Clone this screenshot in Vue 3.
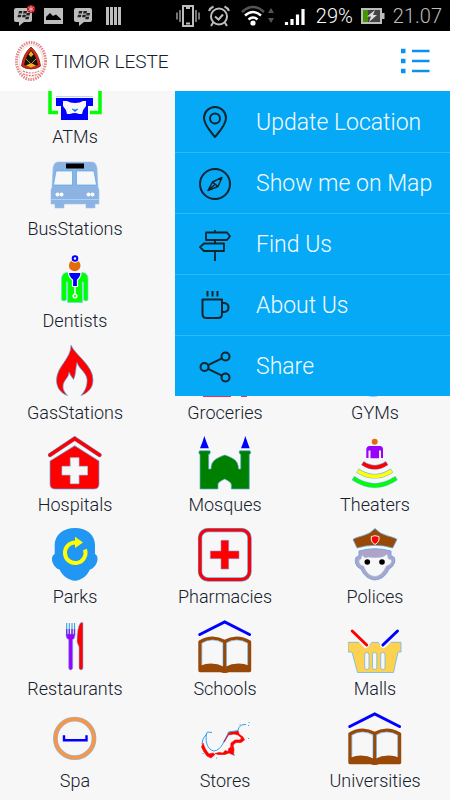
<script setup>
import { ref } from 'vue'

const menuOpen = ref(true)

const places = [
  { name: 'ATMs', icon: 'atm', first: true },
  { name: 'BusStations', icon: 'bus', first: true },
  { name: 'Dentists', icon: 'dentist', first: true },
  { name: 'GasStations', icon: 'gas', first: true },
  { name: 'Groceries', icon: 'grocery' },
  { name: 'GYMs', icon: 'gym' },
  { name: 'Hospitals', icon: 'hospital' },
  { name: 'Mosques', icon: 'mosque' },
  { name: 'Theaters', icon: 'theater' },
  { name: 'Parks', icon: 'park' },
  { name: 'Pharmacies', icon: 'pharmacy' },
  { name: 'Polices', icon: 'police' },
  { name: 'Restaurants', icon: 'restaurant' },
  { name: 'Schools', icon: 'school' },
  { name: 'Malls', icon: 'mall' },
  { name: 'Spa', icon: 'spa' },
  { name: 'Stores', icon: 'store' },
  { name: 'Universities', icon: 'school' }
]

const actions = [
  { name: 'Update Location', icon: 'pin' },
  { name: 'Show me on Map', icon: 'compass' },
  { name: 'Find Us', icon: 'signpost' },
  { name: 'About Us', icon: 'cup' },
  { name: 'Share', icon: 'share' }
]
</script>

<template>
  <div class="app">
    <svg class="sprite" width="0" height="0" aria-hidden="true">
      <!-- status bar -->
      <symbol id="bbm" viewBox="0 0 20 20">
        <path d="M2 2H16Q18 2 18 4V14Q18 16 16 16H10L5 20V16H2Q0 16 0 14V4Q0 2 2 2Z" fill="#bdbdbd" />
        <path d="M5 5h3.400l-.6 2.500H4.400zM9.600 5H13l-.6 2.500H9zM4 8.800h3.400l-.6 2.500H3.400zM8.600 8.800H12l-.6 2.500H8zM12.700 7h3.400l-.6 2.500h-3.400zM11.800 10.800h3.400l-.6 2.500h-3.400z" fill="#222" />
      </symbol>
      <!-- category icons -->
      <symbol id="atm" viewBox="0 0 54 54">
        <path d="M10 44.500H2V4H52V44.500H42" fill="none" stroke="#0f0" stroke-width="3.500" />
        <path d="M4 4H50V29H4Z" fill="#fff" />
        <path d="M8 28.500H45" stroke="#b9d6f2" />
        <path d="M8 30H45V38H40V52H13V38H8Z" fill="#00f" />
        <path d="M15 33H19Q22 35 27 35T35 33H38V38Q35 41 34 46H31Q27 44 22 46H19Q18 41 15 38Z" fill="#f7f7f7" />
        <path d="M24 41l3 2.500 3-2.500-3 1z" fill="#00f" stroke="#2196f3" />
      </symbol>
      <symbol id="bus" viewBox="0 0 54 54">
        <path d="M10 2H44Q48 2 49 8L50 27L51 30V44H47V48H38V44H16V48H7V44H3V30L4 27L5 8Q6 2 10 2Z" fill="#8db3e2" stroke="#9cc5f2" stroke-width=".6" />
        <path d="M8 11H24.500V25H5.500ZM28.500 11H46L48.500 25H28.500Z" fill="#f7f7f7" stroke="#4da6ee" stroke-width=".7" />
        <rect x="18" y="3.500" width="18" height="5" />
        <path d="M3 39.500H51" stroke="#a9d1f8" />
        <g fill="#fff"><circle cx="9.500" cy="34.500" r="2" /><circle cx="13.500" cy="34.500" r="2" /><circle cx="40.500" cy="34.500" r="2" /><circle cx="44.500" cy="34.500" r="2" /></g>
      </symbol>
      <symbol id="dentist" viewBox="0 0 54 54">
        <circle cx="26.700" cy="13.500" r="5.800" fill="#e36c0a" />
        <circle cx="27" cy="6.500" r="4.200" fill="#f7f7f7" />
        <circle cx="27" cy="6.500" r="2.300" fill="#fff" stroke="#00f" stroke-width="2" />
        <path d="M19 20.500H34.500Q40 21 40 27V48Q38 50 35.500 48V30H34.300L34.500 50.500H19.500V30H18.500V48Q16 50 13.500 48V27Q13.500 21 19 20.500Z" fill="#0f0" stroke="#7dd4ef" stroke-width=".7" />
        <path d="M20.500 20.500H33Q33 25 29.500 28V34.500H24.500V28Q20.500 25 20.500 20.500Z" fill="#00f" stroke="#f7f7f7" stroke-width="1.200" />
        <path d="M27 34V43" stroke="#fff" stroke-width="1.500" /><circle cx="27" cy="44" r="1.800" fill="#0f0" stroke="#fff" stroke-width="1.500" />
      </symbol>
      <symbol id="gas" viewBox="0 0 54 54">
        <path d="M23 1C27 11 45 21 45 36C45 44 40 49 33 51.500C37 47 39.500 42 39 35C38 28 31 25 29 18.500C27.500 24 28 31 25.500 35.500C24 33 22 31 21 28C21 34 15 36 15 43C15 46 17 49 19.500 51.500C12 49 8.500 43 8.500 36C9 22 23 15 23 1Z" fill="#f00" stroke="#53a8e9" stroke-width=".7" />
      </symbol>
      <symbol id="grocery" viewBox="0 0 54 54">
        <path d="M6 12H49L44 40H12ZM5 48H33V53H5ZM43 48H49V53H43Z" fill="#f0305a" />
      </symbol>
      <symbol id="gym" viewBox="0 0 54 54">
        <circle cx="25" cy="32" r="20.500" fill="#2196f3" />
      </symbol>
      <symbol id="hospital" viewBox="0 0 54 54">
        <path d="M2 19L26.700 2.500L51.500 19" fill="none" stroke="#5aa9ea" stroke-width="4.500" stroke-linecap="round" />
        <path d="M2 19L26.700 2.500L51.500 19" fill="none" stroke="#f00" stroke-width="3.500" stroke-linecap="round" />
        <path d="M26.700 9.700L51 25V48Q51 53 46 53H7Q2 53 2 48V25Z" fill="#f00" stroke="#5aa9ea" stroke-width=".7" />
        <path d="M22.300 21.700H31V30.300H39.500V39H31V47.700H22.300V39H14V30.300H22.300Z" fill="#f7f7f7" stroke="#9bcdf2" stroke-width=".7" />
      </symbol>
      <symbol id="mosque" viewBox="0 0 54 54">
        <path d="M6.300 0Q8 5 10.900 12.300H2Q5 5 6.300 0ZM47.300 0Q49 5 51.700 12.300H43Q46 5 47.300 0Z" fill="#00f" />
        <path d="M1.500 14.700H12Q13 16.500 11.500 18.300H10.700V33H13C13 24 19 22 26.700 19C35 22 40.500 24 40.500 33H42.700V18.300H42Q40.500 16.500 41.500 14.700H52Q53.500 16.500 52 18.300H51.300V53H33.300V49C33.300 46 30 45 26.700 43C23 45 20 46 20 49V53H2V18.300H1.500Q0 16.500 1.500 14.700Z" fill="#008000" stroke="#5ab0d8" stroke-width=".7" />
      </symbol>
      <symbol id="theater" viewBox="0 0 54 54">
        <circle cx="26.700" cy="5.700" r="3" fill="#e36c0a" />
        <path d="M21 10H32.500Q35 10.500 35 13V22H33V14.500H31V22.300H22.500V14.500H20.500V22H18.300V13Q18.500 10.500 21 10Z" fill="#9b00ff" />
        <g fill="none" stroke="#6db5ef" stroke-width="4.600"><path d="M14.500 27Q26.700 35.500 39 27M9.500 34.500Q26.700 46 44 34.500M5 42Q26.700 57 48.500 42" /></g>
        <g fill="none" stroke-width="3.600"><path d="M14.700 27.200Q26.700 35.500 38.800 27.200" stroke="#f00" /><path d="M9.800 34.700Q26.700 46 43.700 34.700" stroke="#ff0" /><path d="M5.400 42.300Q26.700 57 48.100 42.300" stroke="#0f0" /></g>
      </symbol>
      <symbol id="park" viewBox="0 0 54 54">
        <path d="M27 0C39 0 47 7 47 17V26C51 28 50 35 46 39Q44 41 42 41.500C39 48 33 52.700 27 52.700S14.500 48 11.500 41.500Q9 41 7.500 39C3.500 35 2.500 28 6.700 26V17C6.700 7 15 0 27 0Z" fill="#2196f3" />
        <path d="M37 21.500A10.300 10.300 0 1 1 28 14.500" fill="none" stroke="#ff0" stroke-width="4" />
        <path d="M27 8.700L35 14.500L27 20Z" fill="#ff0" />
      </symbol>
      <symbol id="pharmacy" viewBox="0 0 54 54">
        <rect x="2" y="2" width="49.500" height="49.500" rx="8" fill="#f7f7f7" stroke="#62a9ea" stroke-width="4.400" />
        <rect x="2" y="2" width="49.500" height="49.500" rx="8" fill="none" stroke="#f00" stroke-width="3.200" />
        <path d="M23 12.300H30.700V23H41V30.700H30.700V41H23V30.700H12.300V23H23Z" fill="#f00" stroke="#8f8fe0" stroke-width=".6" />
      </symbol>
      <symbol id="police" viewBox="0 0 54 54">
        <path d="M27 .5Q32 6 40 8T49 11.500L44.700 20Q27 14.500 9 20L5 11.500Q6 10 14 8T27 .5Z" fill="#984807" stroke="#6aa9df" stroke-width=".8" />
        <path d="M23.300 8.500L27 7.700L31 8.500V12Q30 15 27 16.500Q24 15 23.300 12Z" fill="#f00" stroke="#eee" />
        <path d="M11 23Q27 18.500 43 23V28Q48 28 46.500 35Q44 40 41 41Q37 51 27 52Q17 51 13 41Q9 40 7.500 35Q6.500 28 11 28Z" fill="#b3a2c7" stroke="#65aee9" stroke-width="1" />
        <path d="M14 27Q17 31 20 29Q35 31 39 26L40.500 31Q45 31 43 35Q41 38 38.500 38Q34 48 27 48.500Q19 48 15.500 38Q12 38 11 34Q10.500 31 13 31Z" fill="#f7f7f7" stroke="#8bc0ed" stroke-width=".6" />
        <circle cx="19.300" cy="34" r="2.800" /><circle cx="34" cy="34" r="2.800" />
      </symbol>
      <symbol id="restaurant" viewBox="0 0 54 54">
        <path d="M18 14H27Q27 19 24.700 19.500V48.500Q22.700 51.500 20.700 48.500V19.500Q18 19 18 14Z" fill="#9b00ff" stroke="#66b1ea" stroke-width=".6" />
        <path d="M18.700 3V14M21.300 3V14M24 3V14M26.500 3V14" stroke="#399eef" stroke-width="1.100" />
        <path d="M18.700 9V15M21.300 9V15M24 9V15M26.500 9V15" stroke="#7030e0" stroke-width="1.400" />
        <path d="M35 3V48.500Q33 51.500 31 48.500V27L29 22Q29 8 32 3.500Q34 1.500 35 3Z" fill="#f00" stroke="#76b6ec" stroke-width=".6" />
      </symbol>
      <symbol id="school" viewBox="0 0 54 54">
        <path d="M1.800 14.500L26.700 2L51.500 14.500" fill="none" stroke="#00f" stroke-width="3" stroke-linecap="round" />
        <path d="M2 50.500V22Q14 14.500 26.700 21.500Q39 14.500 51.500 22V50.500Z" fill="#f7f7f7" stroke="#984807" stroke-width="3.400" stroke-linejoin="round" />
        <path d="M26.700 21V48" stroke="#984807" stroke-width="3.400" />
        <path d="M3 45.500Q14 41 26.700 47Q39 41 51 45.500V51.500H31Q30 53 26.700 53T22.500 51.500H3Z" fill="#984807" />
        <path d="M3.900 45V23Q14 17 24.900 23V45.500M28.500 45.500V23Q39 17 49.700 23V45" fill="none" stroke="#63a9e8" stroke-width=".6" />
      </symbol>
      <symbol id="mall" viewBox="0 0 54 54">
        <path d="M0 22.300H12L16 26H21L24 22.300H30L33 26H38L42 22.300H53V32H50L45.500 52.500H9.500L4 32H0Z" fill="#fdd251" stroke="#70b5e9" stroke-width=".8" />
        <g fill="#f7f7f7" stroke="#70b5e9" stroke-width=".8"><rect x="16.700" y="32.500" width="4.300" height="17" rx="2.100" /><rect x="24.500" y="32.500" width="4.300" height="17" rx="2.100" /><rect x="32.700" y="32.500" width="4.300" height="17" rx="2.100" /></g>
        <path d="M10 16L18 24.500M44 16L35.500 24.500" stroke="#f7f7f7" stroke-width="7" stroke-linecap="round" />
        <path d="M4.200 11L18.700 25" stroke="#f00" stroke-width="3" stroke-linecap="round" />
        <path d="M49.500 11L34.900 25" stroke="#00f" stroke-width="3" stroke-linecap="round" />
      </symbol>
      <symbol id="spa" viewBox="0 0 54 54">
        <circle cx="26.700" cy="26.400" r="19.300" fill="none" stroke="#8cbce5" stroke-width="4.800" />
        <circle cx="26.700" cy="26.400" r="19.300" fill="none" stroke="#f79646" stroke-width="3.600" />
        <path d="M16 23.300V28.300H38.500V23.300" fill="none" stroke="#00f" stroke-width="2.400" />
      </symbol>
      <symbol id="store" viewBox="0 0 54 54">
        <path d="M5 31L3.500 35L6 40L9 44L13 46L17 42.500L15 41L11 42L8 38L6.500 35ZM17 41.500L20 42.500L27 42.500L31 41L35.500 43L36 37L35 33L33 36L31 36L30 39.500L27 38.500L25 41L21 40.500ZM30 23V20.500L34 19.500H38L40 18.500L41 22L45 25L46.500 28L43 30.500L38 30.500L34 34L32.500 36L33 31L37 28L42 28L43.500 26L40 23L36 22Z" fill="#f00" stroke="#f00" stroke-width=".6" stroke-linejoin="round" />
        <path d="M14 20.500L9.500 20L8.500 22L5 27L4 32M8.500 22C7 31 10 38 16 39C24 38 26 28 31 20L40 18.500Q41 12 48 12.500" fill="none" stroke="#31a2ee" stroke-width="1" />
        <path d="M26 30l4-7" stroke="#b32b63" stroke-width="1.400" />
        <path d="M42 12v.8M51 10v1M50 13.500h1M50 26.500h1M18 46h1M5 41v1M36 44v-2" stroke="#31a2ee" stroke-width="1" />
      </symbol>
      <!-- menu icons -->
      <symbol id="pin" viewBox="0 0 32 32">
        <path d="M16 31C12 26 5 19 5 12A11 11 0 0 1 27 12C27 19 20 26 16 31Z" /><circle cx="16" cy="12.500" r="5" />
      </symbol>
      <symbol id="compass" viewBox="0 0 32 32">
        <circle cx="16" cy="16" r="15" /><path d="M23 9.500L19 18.500L9 22.500L13.500 14ZM13.500 14L19 18.500M9 22.500L16.500 16" stroke-width="1.500" />
      </symbol>
      <symbol id="signpost" viewBox="0 0 32 32">
        <path d="M16 1V3.500M16 11V14.500M16 22V32M7 3.500H28L31 7.200L28 11H7ZM25 14.500H5L1 18.200L5 22H25ZM12 22H22" stroke-width="1.800" />
      </symbol>
      <symbol id="cup" viewBox="0 0 32 32">
        <path d="M3.500 9.500H23V24Q23 28 19 28H7.500Q3.500 28 3.500 24ZM23 13H25Q29.500 13.500 29.500 17.500T25 22H23M8.500 1V6.500M13.500 1V6.500M18.500 1V6.500" />
      </symbol>
      <symbol id="share" viewBox="0 0 32 32">
        <circle cx="5.500" cy="16" r="4" /><circle cx="26.500" cy="5.500" r="4" /><circle cx="26.500" cy="26.500" r="4" /><path d="M9 14.200L23 7.300M9 17.800L23 24.700" />
      </symbol>
    </svg>

    <div class="status">
      <div class="status-group notices">
        <span class="chat">
          <svg width="20" height="20"><use href="#bbm" /></svg>
          <svg class="star" width="8" height="8" viewBox="0 0 8 8"><circle cx="4" cy="4" r="4" fill="#c4161c" /><path d="M4 1V7M1.400 2.500L6.600 5.500M1.400 5.500L6.600 2.500" stroke="#f2b8b8" /></svg>
        </span>
        <svg width="20" height="18" viewBox="0 0 20 18"><rect y="1" width="19" height="16" fill="#bdbdbd" /><path d="M2 13V10L6 6L9 9L12 7.500L17 12V13Z" /></svg>
        <svg width="20" height="20"><use href="#bbm" /></svg>
        <svg width="20" height="20" viewBox="0 0 20 20"><path d="M3.500 1V19M7.500 1V19M11.500 1V19M15.500 1V19" stroke="#bdbdbd" stroke-width="3" /></svg>
      </div>
      <div class="status-group">
        <svg width="24" height="22" viewBox="0 0 24 22"><path d="M7 1H17V21H7ZM10 18.500H14M10 3H14" fill="none" stroke="#bdbdbd" stroke-width="2" /><path d="M4 5V17M1 7.500V14.500M20 5V17M23 7.500V14.500" stroke="#9b9b9b" stroke-width="1.500" /></svg>
        <svg width="24" height="22" viewBox="0 0 24 22"><g fill="none" stroke="#bdbdbd" stroke-width="2"><circle cx="11" cy="11.500" r="8" /><path d="M7 11.500L10.500 14.500L15 9.500M1 6Q2 3 5.500 1.500M16.500 1.500Q20 3 21 6M5.500 17L3 21M16.500 17L19 21" /></g></svg>
        <svg width="36" height="22" viewBox="0 0 36 22"><g fill="none" stroke-width="2.500"><path d="M2 7Q13 -3 24 7" stroke="#555" /><path d="M5 10.500Q13 3.500 21 10.500M8.500 14.500Q13 10.500 17.500 14.500" stroke="#fff" /></g><circle cx="13" cy="18" r="2.600" fill="#fff" /><path d="M31 3L34 8H28ZM31 18L28 13H34Z" fill="#555" /></svg>
        <svg width="24" height="20" viewBox="0 0 24 20"><path d="M2.500 16V19M8 13V19M13.500 8.500V19M19 3V19" stroke="#fff" stroke-width="3.200" /></svg>
        <span class="charge">29%</span>
        <svg width="24" height="18" viewBox="0 0 24 18"><path d="M1 2H20V16H1Z" fill="#444" stroke="#bdbdbd" stroke-width="2" /><path d="M2 3H7V15H2Z" fill="#459400" /><path d="M22 6V12" stroke="#bdbdbd" stroke-width="3" /><path d="M14 3L6 9.500H10L8 15L16 8H12Z" fill="#ddd" /></svg>
        <time class="clock">21.07</time>
      </div>
    </div>

    <header class="bar">
      <svg class="logo" width="34" height="42" viewBox="0 0 34 42" aria-hidden="true">
        <ellipse cx="17" cy="21" rx="14.500" ry="18.500" fill="none" stroke="#e08a8a" stroke-width="3" stroke-dasharray="1.500 1" />
        <ellipse cx="17" cy="21" rx="12" ry="16" fill="#fff" stroke="#edc0c0" stroke-width=".6" />
        <path d="M17 7Q25 14 26.500 26Q24 28.500 17 29Q10 28.500 7.500 26Q9 14 17 7Z" fill="#d62a10" stroke="#7d140d" stroke-width=".8" />
        <path d="M17 10Q22 15 24 25L17 27L10 25Q12 15 17 10Z" fill="#16120c" />
        <path d="M17 11L19.500 14.500L17 17L14.500 14.500ZM12 25.500L17 23L22 25.500L17 27.500Z" fill="#efb320" />
        <path d="M12 19L16 23M22 19L18 23" stroke="#c78e3a" />
        <path d="M9 31Q17 35 25 31M9 34Q17 37 25 34" fill="none" stroke="#de7373" stroke-width="1.200" stroke-dasharray="2 1" />
      </svg>
      <h1 class="title">TIMOR LESTE</h1>
      <button class="toggle" type="button" aria-label="Menu" :aria-expanded="menuOpen" @click="menuOpen = !menuOpen">
        <svg width="30" height="26" viewBox="0 0 30 26"><path d="M1 3H5.500M1 13H5.500M1 23H5.500" stroke="#0b92f1" stroke-width="4.500" /><path d="M12 3H29.500M12 13H29.500M12 23H29.500" stroke="#0b92f1" stroke-width="2.600" /></svg>
      </button>
      <nav v-if="menuOpen" class="menu">
        <button v-for="action in actions" :key="action.name" class="action" type="button">
          <svg class="action-icon" width="32" height="32" aria-hidden="true"><use :href="'#' + action.icon" /></svg>
          {{ action.name }}
        </button>
      </nav>
    </header>

    <main class="content">
      <div class="grid">
        <button v-for="place in places" :key="place.name" class="place" :class="{ first: place.first }" type="button">
          <svg width="54" height="54" aria-hidden="true"><use :href="'#' + place.icon" /></svg>
          <span>{{ place.name }}</span>
        </button>
      </div>
    </main>
  </div>
</template>

<style>
body {
  background: #f7f7f7;
}
</style>

<style scoped>
.app {
  display: flex;
  flex-direction: column;
  height: 100vh;
  overflow: hidden;
  background: #f7f7f7;
  color: #14202b;
  font-family: Roboto, "Liberation Sans", sans-serif;
  font-weight: 300;
}

.sprite {
  position: absolute;
}

svg {
  display: block;
  flex: none;
}

button {
  border: 0;
  padding: 0;
  background: none;
  color: inherit;
  font: inherit;
  cursor: pointer;
}

.status {
  display: flex;
  flex: none;
  align-items: center;
  justify-content: space-between;
  height: 31px;
  padding: 0 8px 0 14px;
  background: #000;
  font-size: 20px;
}

.status-group {
  display: flex;
  align-items: center;
  gap: 8px;
}

.notices {
  gap: 10px;
}

.chat {
  position: relative;
}

.star {
  position: absolute;
  top: -1px;
  right: -1px;
}

.charge {
  color: #fff;
}

.clock {
  color: #bdbdbd;
}

.bar {
  position: relative;
  z-index: 1;
  display: flex;
  flex: none;
  align-items: center;
  gap: 4px;
  height: 60px;
  padding: 0 20px 0 14px;
  background: #fff;
}

.title {
  flex: 1;
  margin: 0;
  font-size: 19px;
  font-weight: 300;
}

.menu {
  position: absolute;
  top: 100%;
  right: 0;
  display: flex;
  flex-direction: column;
  width: 275px;
  background: #05a9f6;
}

.action {
  display: flex;
  align-items: center;
  gap: 25px;
  height: 61px;
  padding: 1px 24px 0;
  color: #f4fbff;
  font-size: 23px;
  text-align: left;
  white-space: nowrap;
}

.action + .action {
  border-top: 1px solid #2fb9f8;
}

.action-icon {
  fill: none;
  stroke: #10242e;
  stroke-width: 2;
  stroke-linejoin: round;
}

.content {
  display: flex;
  flex: 1;
  flex-direction: column;
  justify-content: flex-end;
  min-height: 0;
  overflow: hidden;
}

.grid {
  display: grid;
  flex: none;
  grid-template-columns: repeat(3, 1fr);
}

.place {
  display: flex;
  flex-direction: column;
  align-items: center;
  gap: 3px;
  padding: 4px 0 7px;
  font-size: 18px;
  line-height: 24px;
}

.first {
  grid-column: 1;
}
</style>
